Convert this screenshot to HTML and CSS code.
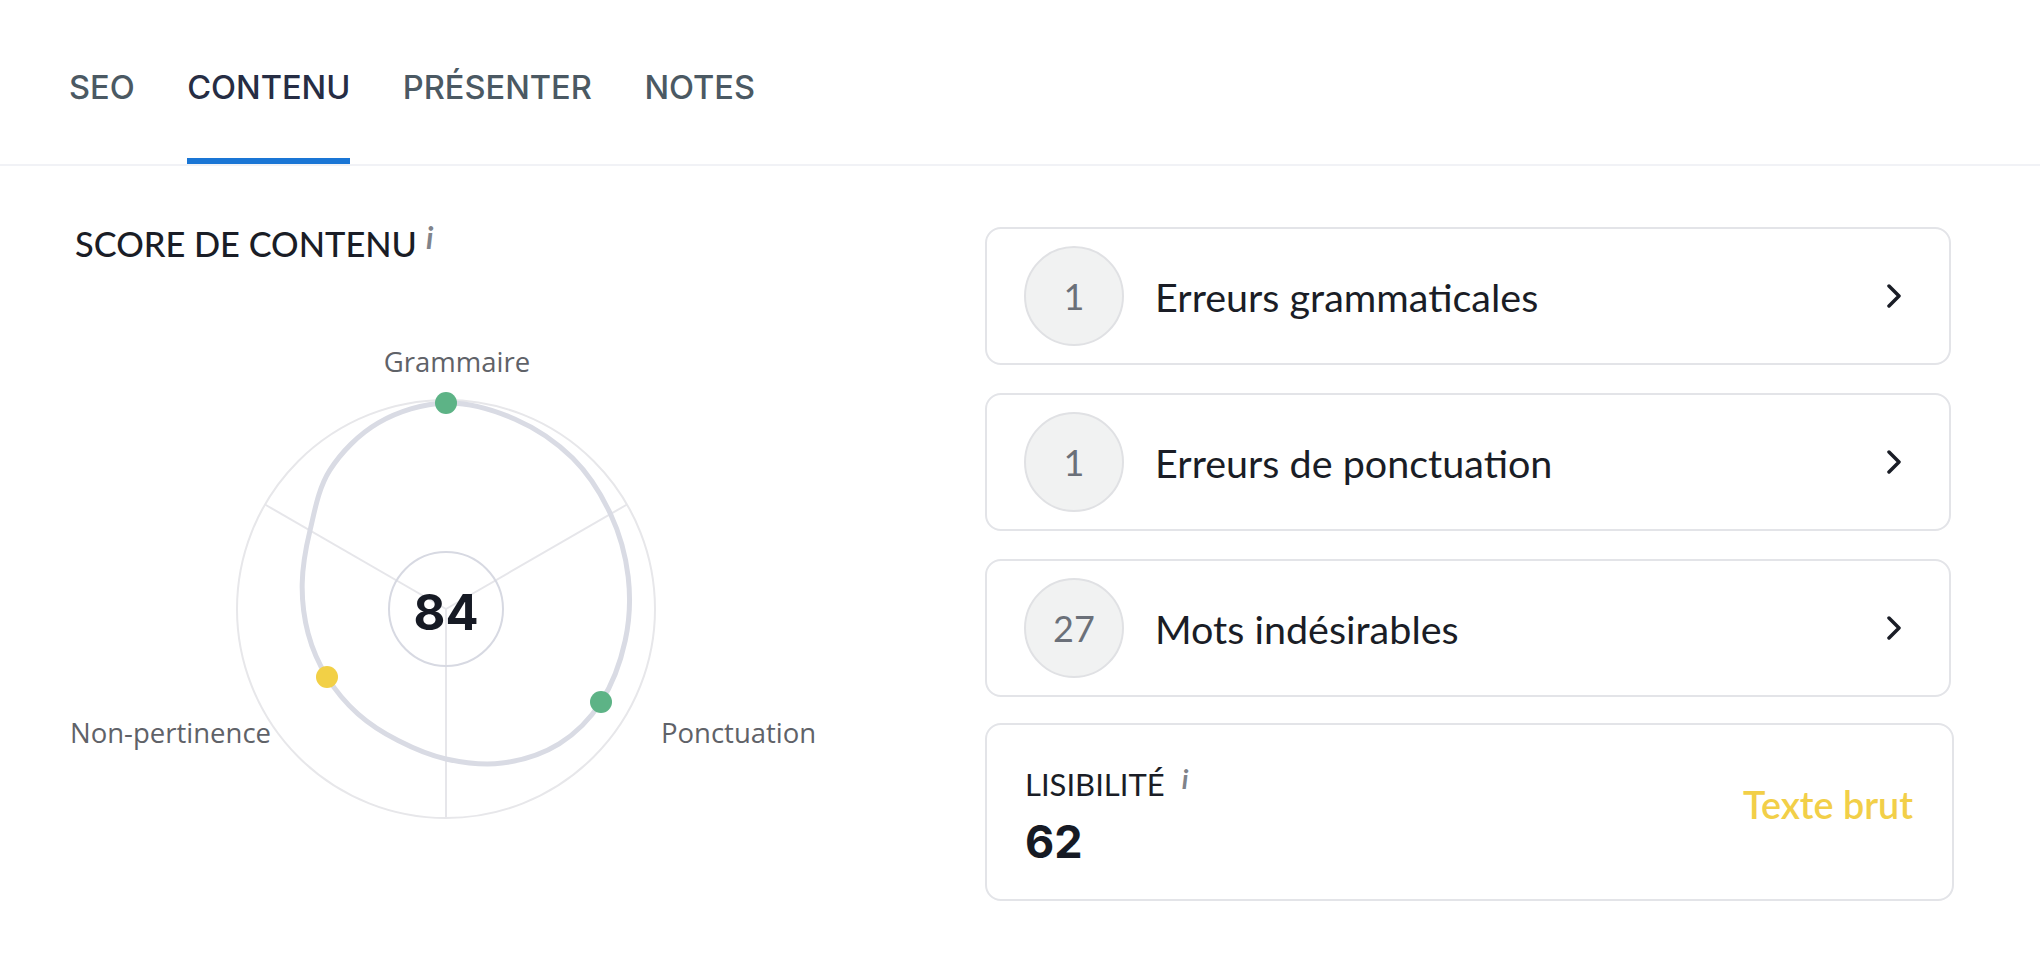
FILE: index.html
```html
<!DOCTYPE html>
<html lang="fr">
<head>
<meta charset="utf-8">
<title>Contenu</title>
<link rel="stylesheet" href="styles.css">
</head>
<body>
<nav class="tabs">
  <div class="tab">SEO</div>
  <div class="tab active">CONTENU</div>
  <div class="tab">PRÉSENTER</div>
  <div class="tab">NOTES</div>
</nav>
<main class="main">
  <section class="score">
    <h2 class="score-title">SCORE DE CONTENU<span class="info">i</span></h2>
    <svg class="chart" width="900" height="560" viewBox="0 300 900 560" xmlns="http://www.w3.org/2000/svg">
      <circle cx="446" cy="609" r="209" fill="none" stroke="#e7e7ea" stroke-width="2"/>
      <line x1="446" y1="609" x2="265" y2="504.5" stroke="#e6e6ea" stroke-width="2"/>
      <line x1="446" y1="609" x2="627" y2="504.5" stroke="#e6e6ea" stroke-width="2"/>
      <line x1="446" y1="609" x2="446" y2="818" stroke="#e6e6ea" stroke-width="2"/>
      <circle cx="446" cy="609" r="57" fill="none" stroke="#d7d9e2" stroke-width="2"/>
      <path d="M446,403 C468.8,402.38 494,410.02 515.1,419.2 C536.2,428.38 556.7,442.3 572.6,458.1 C588.5,473.9 601.23,494.2 610.5,514 C619.77,533.8 625.75,555.8 628.2,576.9 C630.65,598 629.73,619.75 625.2,640.6 C620.67,661.45 612.02,684.8 601,702 C589.98,719.2 575.58,733.62 559.1,743.8 C542.62,753.98 520.95,760.57 502.1,763.1 C483.25,765.63 463.33,762.75 446,759 C428.67,755.25 412.78,748.12 398.1,740.6 C383.42,733.08 369.75,724.5 357.9,713.9 C346.05,703.3 335.3,690.43 327,677 C318.7,663.57 312.23,648.85 308.1,633.3 C303.97,617.75 301.88,600.83 302.2,583.7 C302.52,566.57 305.42,549.38 310,530.5 C314.58,511.62 318.32,488.33 329.7,470.4 C341.08,452.47 358.92,434.13 378.3,422.9 C397.68,411.67 423.2,403.62 446,403 Z" fill="none" stroke="#d9dbe4" stroke-width="5"/>
      <circle cx="446" cy="403" r="11" fill="#5db386"/>
      <circle cx="601" cy="702" r="11" fill="#5db386"/>
      <circle cx="327" cy="677" r="11" fill="#f2d046"/>
      <text class="axis" x="457" y="372" text-anchor="middle">Grammaire</text>
      <text class="axis" x="70" y="743">Non-pertinence</text>
      <text class="axis" x="661" y="743">Ponctuation</text>
      <text class="score-value" x="446" y="630" text-anchor="middle">84</text>
    </svg>
  </section>
  <section class="cards">
    <div class="card row">
      <div class="count">1</div>
      <div class="label">Erreurs grammaticales</div>
      <svg class="chev" width="14" height="24" viewBox="0 0 14 24"><path d="M2 2 L12 12 L2 22" fill="none" stroke="#1a1d26" stroke-width="3.5" stroke-linecap="round" stroke-linejoin="round"/></svg>
    </div>
    <div class="card row">
      <div class="count">1</div>
      <div class="label">Erreurs de ponctuation</div>
      <svg class="chev" width="14" height="24" viewBox="0 0 14 24"><path d="M2 2 L12 12 L2 22" fill="none" stroke="#1a1d26" stroke-width="3.5" stroke-linecap="round" stroke-linejoin="round"/></svg>
    </div>
    <div class="card row">
      <div class="count">27</div>
      <div class="label">Mots indésirables</div>
      <svg class="chev" width="14" height="24" viewBox="0 0 14 24"><path d="M2 2 L12 12 L2 22" fill="none" stroke="#1a1d26" stroke-width="3.5" stroke-linecap="round" stroke-linejoin="round"/></svg>
    </div>
    <div class="card readability">
      <div class="read-info">
        <div class="read-title">LISIBILITÉ<span class="info small">i</span></div>
        <div class="read-value">62</div>
      </div>
      <div class="read-status">Texte brut</div>
    </div>
  </section>
</main>
</body>
</html>
```

FILE: styles.css
```css
html, body {
  margin: 0;
  padding: 0;
  background: #ffffff;
}
body {
  font-family: "Lato", "Open Sans", sans-serif;
  color: #1a1d26;
  width: 2040px;
  height: 970px;
  overflow: hidden;
}

/* Tabs */
.tabs {
  display: flex;
  gap: 52.5px;
  padding-left: 69px;
  height: 164px;
  border-bottom: 2px solid #f1f2f6;
}
.tab {
  box-sizing: border-box;
  height: 164px;
  padding-top: 16px;
  display: flex;
  align-items: center;
  border-bottom: 6px solid transparent;
  font-family: "Inter", sans-serif;
  font-weight: 500;
  font-size: 32.6px;
  color: #4b5963;
}
.tab.active {
  color: #262d44;
  border-bottom-color: #1a76d5;
}

/* Main */
.main {
  display: flex;
}
.score {
  width: 985px;
  padding-top: 51px;
}
.score-title {
  margin: 0 0 0 75px;
  font-family: "Lato", sans-serif;
  font-weight: 500;
  font-size: 34.4px;
  line-height: 40px;
  color: #1a1d26;
}
.info {
  font-family: "Lato", sans-serif;
  font-style: italic;
  font-weight: 700;
  font-size: 30px;
  color: #80838a;
  margin-left: 9px;
  vertical-align: 8px;
}
.info.small {
  font-size: 27px;
  margin-left: 17px;
  vertical-align: 7px;
}
.chart {
  display: block;
  margin-top: 36px;
}
.axis {
  font-family: "Open Sans", sans-serif;
  font-size: 27.5px;
  fill: #5f6268;
}
.score-value {
  font-family: "Inter", sans-serif;
  font-weight: 700;
  font-size: 49px;
  fill: #161a24;
}

/* Cards */
.cards {
  display: flex;
  flex-direction: column;
  gap: 28px;
  padding-top: 61px;
}
.card {
  box-sizing: border-box;
  width: 966px;
  border: 2px solid #e3e4e8;
  border-radius: 16px;
  background: #ffffff;
}
.row {
  height: 138px;
  display: flex;
  align-items: center;
  padding: 0 48px 0 37px;
}
.count {
  box-sizing: border-box;
  width: 100px;
  height: 100px;
  border-radius: 50%;
  background: #f1f2f2;
  border: 2px solid #e0e1e4;
  display: flex;
  align-items: center;
  justify-content: center;
  font-size: 36px;
  color: #6b7079;
}
.label {
  margin-left: 31px;
  font-size: 39.5px;
  color: #1a1d26;
}
.chev {
  margin-left: auto;
  display: block;
}
.readability {
  width: 969px;
  margin-top: -2px;
  display: flex;
  align-items: center;
  justify-content: space-between;
  padding: 36px 39px 29px 38px;
}
.read-title {
  font-size: 31px;
  line-height: 36px;
  color: #1a1d26;
}
.read-value {
  margin-top: 12px;
  font-family: "Inter", sans-serif;
  font-weight: 700;
  font-size: 45px;
  line-height: 56px;
  color: #161a24;
}
.read-status {
  font-size: 37.7px;
  line-height: 44px;
  margin-bottom: 22px;
  font-weight: 600;
  color: #f2cf48;
}
```
